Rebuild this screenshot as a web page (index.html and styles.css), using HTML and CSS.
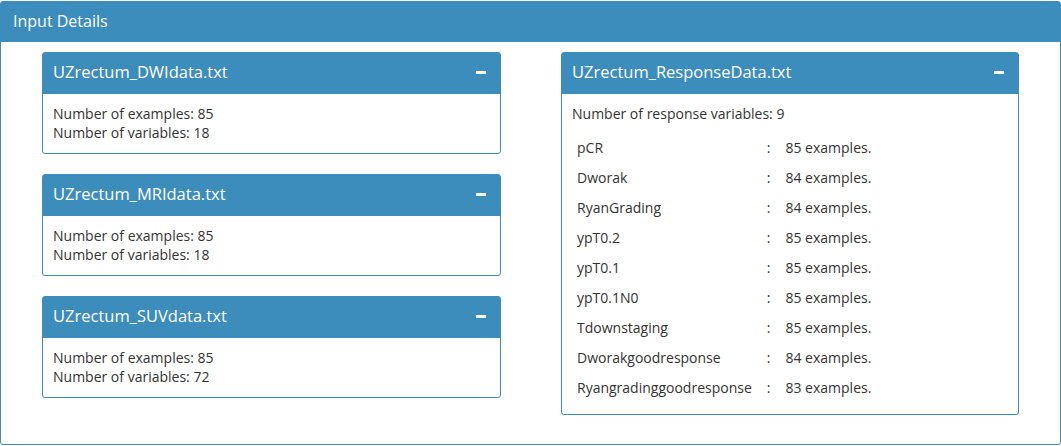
FILE: index.html
```html
<!DOCTYPE html>
<html>
<head>
<meta charset="utf-8">
<link rel="stylesheet" href="styles.css">
</head>
<body>
<div class="box outer">
  <div class="box-header"><h3 class="box-title big">Input Details</h3></div>
  <div class="outer-body">
    <div class="col">
      <div class="box">
        <div class="box-header"><h3 class="box-title">UZrectum_DWIdata.txt</h3><span class="minus"></span></div>
        <div class="box-body">
          <div>Number of examples: 85</div>
          <div>Number of variables: 18</div>
        </div>
      </div>
      <div class="box">
        <div class="box-header"><h3 class="box-title">UZrectum_MRIdata.txt</h3><span class="minus"></span></div>
        <div class="box-body">
          <div>Number of examples: 85</div>
          <div>Number of variables: 18</div>
        </div>
      </div>
      <div class="box">
        <div class="box-header"><h3 class="box-title">UZrectum_SUVdata.txt</h3><span class="minus"></span></div>
        <div class="box-body">
          <div>Number of examples: 85</div>
          <div>Number of variables: 72</div>
        </div>
      </div>
    </div>
    <div class="col">
      <div class="box">
        <div class="box-header"><h3 class="box-title">UZrectum_ResponseData.txt</h3><span class="minus"></span></div>
        <div class="box-body">
          <p class="lead">Number of response variables: 9</p>
          <table class="resp">
            <tr><td class="name">pCR</td><td class="colon">:</td><td>85 examples.</td></tr>
            <tr><td class="name">Dworak</td><td class="colon">:</td><td>84 examples.</td></tr>
            <tr><td class="name">RyanGrading</td><td class="colon">:</td><td>84 examples.</td></tr>
            <tr><td class="name">ypT0.2</td><td class="colon">:</td><td>85 examples.</td></tr>
            <tr><td class="name">ypT0.1</td><td class="colon">:</td><td>85 examples.</td></tr>
            <tr><td class="name">ypT0.1N0</td><td class="colon">:</td><td>85 examples.</td></tr>
            <tr><td class="name">Tdownstaging</td><td class="colon">:</td><td>85 examples.</td></tr>
            <tr><td class="name">Dworakgoodresponse</td><td class="colon">:</td><td>84 examples.</td></tr>
            <tr><td class="name">Ryangradinggoodresponse</td><td class="colon">:</td><td>83 examples.</td></tr>
          </table>
        </div>
      </div>
    </div>
  </div>
</div>
</body>
</html>
```

FILE: styles.css
```css
* { box-sizing: border-box; }
html, body { margin: 0; padding: 0; background: #fff; }
body {
  font-family: "Open Sans", "Noto Sans", sans-serif;
  font-size: 14px;
  color: #333;
  padding-top: 1px;
}
.box {
  border: 1px solid #3c8dbc;
  border-radius: 3px;
  background: #fff;
  margin-bottom: 20px;
}
.outer {
  width: 1061px;
  height: 444px;
  margin: 0;
}
.box-header {
  background: #3c8dbc;
  color: #fff;
  display: flex;
  align-items: center;
  justify-content: space-between;
  height: 41px;
  padding: 0 10px 2px;
}
.outer > .box-header { height: 40px; padding: 0 12px 2px; }
.box-title {
  margin: 0;
  font-weight: normal;
  font-size: 16.5px;
  line-height: 1;
}
.box-title.big { font-size: 16px; }
.minus {
  width: 10px;
  height: 3px;
  background: #fff;
  margin-right: 4px;
}
.outer-body {
  display: flex;
  padding: 10px 40px 0 41px;
  gap: 60px;
}
.col { width: 459px; display: flex; flex-direction: column; }
.col + .col { width: 458px; }
.box-body {
  padding: 10px 10px 11px;
  line-height: 19px;
}
.lead { margin: 0 0 10px; line-height: 19px; }
.resp { border-collapse: collapse; }
.resp td { padding: 0 5px; height: 30px; line-height: 20px; }
.resp td.name { padding-right: 10px; }
.resp td.colon { padding-right: 10px; }
```
